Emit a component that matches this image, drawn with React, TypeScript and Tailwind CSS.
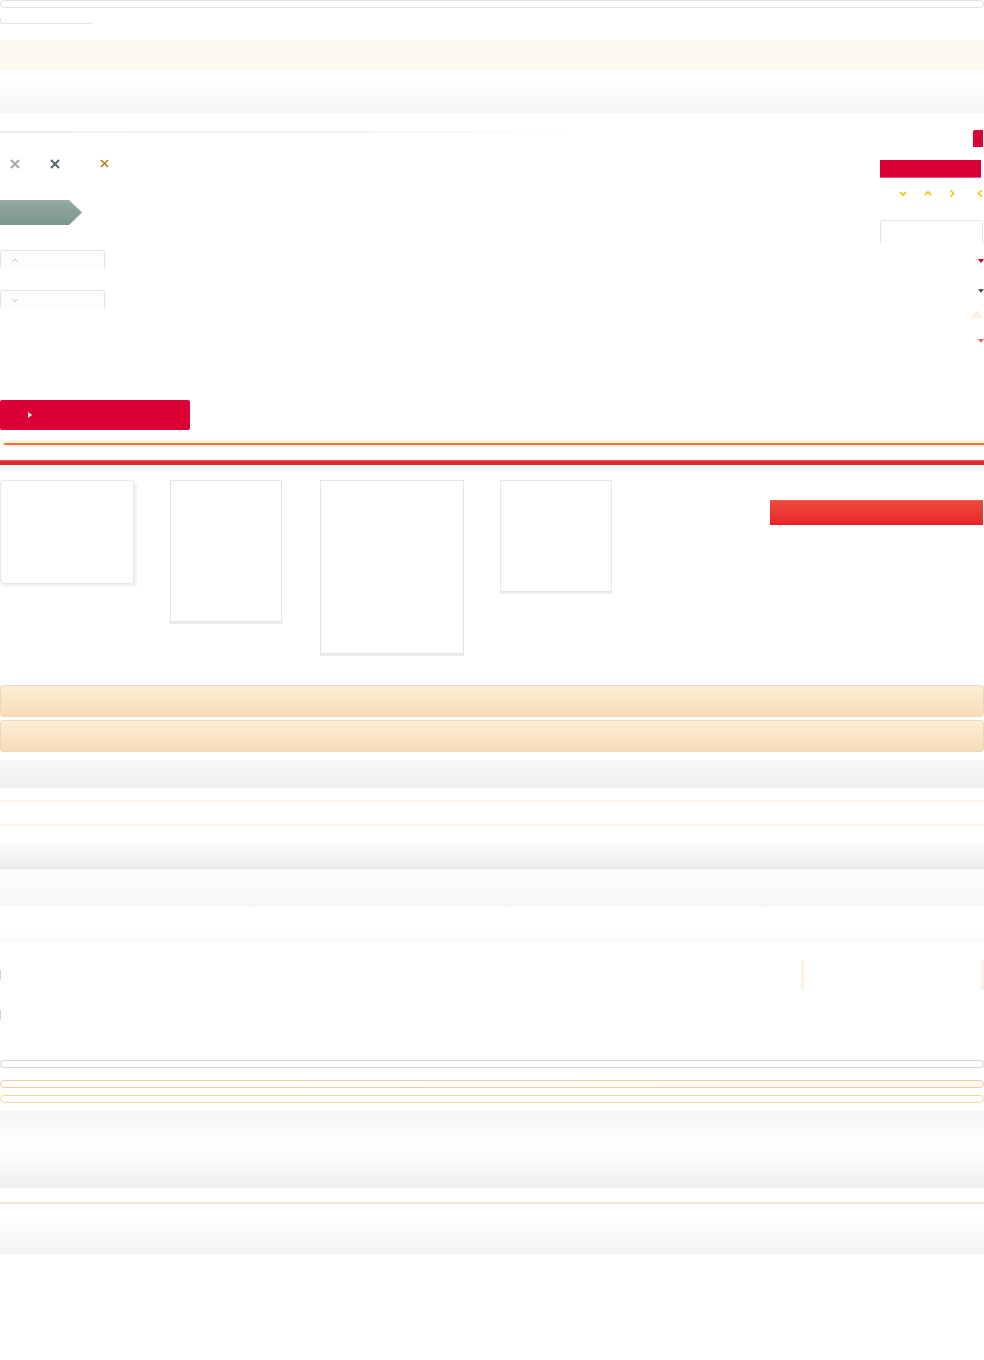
const Cross = ({ color, size, stroke }: { color: string; size: number; stroke: number }) => (
  <svg width={size} height={size} viewBox="0 0 10 10" className="block">
    <path d="M1 1L9 9M9 1L1 9" stroke={color} strokeWidth={stroke} fill="none" />
  </svg>
);

const Chevron = ({ dir, color, w, h, sw = 1.6 }: { dir: 'up' | 'down' | 'left' | 'right'; color: string; w: number; h: number; sw?: number }) => {
  const d = {
    down: 'M1 2L5 6L9 2',
    up: 'M1 6L5 2L9 6',
    right: 'M3 1L7 5L3 9',
    left: 'M7 1L3 5L7 9',
  }[dir];
  const vb = dir === 'up' || dir === 'down' ? '0 0 10 8' : '0 0 10 10';
  return (
    <svg width={w} height={h} viewBox={vb} className="block">
      <path d={d} stroke={color} strokeWidth={sw} fill="none" />
    </svg>
  );
};

const Tri = ({ dir, color, w, h }: { dir: 'up' | 'down'; color: string; w: number; h: number }) => (
  <svg width={w} height={h} viewBox="0 0 10 6" preserveAspectRatio="none" className="block">
    <path d={dir === 'down' ? 'M0 0H10L5 6Z' : 'M0 6H10L5 0Z'} fill={color} />
  </svg>
);

const Tab = ({ dir }: { dir: 'up' | 'down' }) => (
  <div className="h-[18px] w-[105px] rounded-t-[3px] border-x border-t border-[#e2e2e2] bg-[#fdfdfd] pl-[10px] pt-[7px]">
    <Chevron dir={dir} color="#a0a0a0" w={8} h={5} sw={1.2} />
  </div>
);

const Card = ({ w, h, ml }: { w: string; h: string; ml: string }) => (
  <div className={`${w} ${h} ${ml} border border-[#e5e5e5] bg-white shadow-[0_2px_0_#ececec]`} />
);

const App = () => {
  return (
    <div className="w-[984px] bg-white font-['Liberation_Sans',sans-serif]">
      {/* top strips */}
      <div className="h-[8px] rounded-full border border-[#e2e2e2]" />
      <div className="mt-[10px] h-[6px] w-[93px] rounded-bl-[3px] border-b border-l border-[#e4e4e4]" />
      <div className="mt-[16px] h-[30px] bg-[#fdf8f0]" />
      <div className="h-[43px] bg-gradient-to-b from-white from-30% to-[#f6f6f6]" />

      {/* controls */}
      <div className="flex h-[327px] justify-between">
        <div className="flex flex-col">
          <div className="mt-[18px] h-[2px] w-[580px] bg-gradient-to-r from-[#eeeeee] via-[#f1f1f1] to-transparent" />
          <div className="mt-[26px] flex h-[10px] items-center">
            <div className="ml-[10px]">
              <Cross color="#a8a8a8" size={10} stroke={2} />
            </div>
            <div className="ml-[30px]">
              <Cross color="#56666e" size={10} stroke={2} />
            </div>
            <div className="ml-[40px] -mt-[2px]">
              <Cross color="#b07a0a" size={9} stroke={1.6} />
            </div>
          </div>
          <div className="mt-[31px] h-[25px] w-[82px]">
            <svg width="82" height="25" viewBox="0 0 82 25" className="block">
              <defs>
                <linearGradient id="tag" x1="0" y1="0" x2="0" y2="1">
                  <stop offset="0" stopColor="#97aea7" />
                  <stop offset="0.2" stopColor="#8ea59e" />
                  <stop offset="1" stopColor="#7d968e" />
                </linearGradient>
              </defs>
              <path d="M0 0H69L82 12.5L69 25H0Z" fill="url(#tag)" />
            </svg>
          </div>
          <div className="mt-[25px]">
            <Tab dir="up" />
          </div>
          <div className="mt-[22px]">
            <Tab dir="down" />
          </div>
          <div className="mt-[92px] flex h-[30px] w-[190px] items-center rounded-[2px] bg-[#db0036] pl-[28px]">
            <svg width="4" height="6" viewBox="0 0 4 6" className="block">
              <path d="M0 0L4 3L0 6Z" fill="#ffffff" />
            </svg>
          </div>
        </div>

        <div className="flex w-[104px] flex-col">
          <div className="mt-[17px] mr-[1px] h-[17px] w-[10px] self-end rounded-tl-[2px] bg-[#db0036]" />
          <div className="mt-[13px] h-[17px] w-[101px] bg-[#db0036] shadow-[0_1px_0_#e9577a]" />
          <div className="mt-[11px] flex h-[10px] items-center">
            <div className="ml-[19px]">
              <Chevron dir="down" color="#f5c400" w={8} h={7} sw={2} />
            </div>
            <div className="ml-[17px]">
              <Chevron dir="up" color="#f5c400" w={8} h={7} sw={2} />
            </div>
            <div className="ml-[16px]">
              <Chevron dir="right" color="#f5c400" w={8} h={11} sw={2} />
            </div>
            <div className="ml-[20px]">
              <Chevron dir="left" color="#f5c400" w={8} h={11} sw={2} />
            </div>
          </div>
          <div className="mt-[22px] mr-[1px] h-[24px] rounded-t-[2px] border-x border-t border-[#e4e4e4]" />
          <div className="mt-[15px] self-end">
            <Tri dir="down" color="#cc0000" w={6} h={4} />
          </div>
          <div className="mt-[26px] self-end">
            <Tri dir="down" color="#555555" w={6} h={4} />
          </div>
          <div className="mt-[17px] self-end">
            <Tri dir="up" color="#fff0e3" w={14} h={8} />
          </div>
          <div className="mt-[21px] self-end">
            <Tri dir="down" color="#f26552" w={6} h={4} />
          </div>
        </div>
      </div>

      {/* progress lines */}
      <div className="ml-[2px] flex h-[7px] items-center rounded-l-full bg-[#fdf1e2] pl-[2px]">
        <div className="h-[2px] w-full rounded-l-full bg-[#fc7038]" />
      </div>
      <div className="mt-[13px] h-[5px] border-t border-[#f26060] bg-[#e8262a]" />

      {/* cards */}
      <div className="mt-[15px] flex h-[180px] items-start">
        <div className="h-[104px] w-[134px] rounded-[3px] border border-[#e8e8e8] bg-white shadow-[1px_1px_0_#f0f0f0,3px_3px_0_#f3f3f3]" />
        <Card w="w-[112px]" h="h-[142px]" ml="ml-[36px]" />
        <Card w="w-[144px]" h="h-[174px]" ml="ml-[38px]" />
        <Card w="w-[112px]" h="h-[112px]" ml="ml-[36px]" />
        <div className="mt-[20px] ml-[158px] h-[25px] w-[213px] border-t border-[#f25a4a] bg-gradient-to-b from-[#ec4a39] to-[#e8212a]" />
      </div>

      {/* bands */}
      <div className="mt-[25px] h-[32px] rounded-[3px] border border-[#ecd6bf] bg-gradient-to-b from-[#fbefd3] to-[#f8dcb9]" />
      <div className="mt-[3px] h-[32px] rounded-[3px] border border-[#ecd6bf] bg-gradient-to-b from-[#fbefd3] to-[#f8dcb9]" />
      <div className="mt-[8px] h-[28px] bg-gradient-to-b from-[#f7f7f7] to-[#eef0ef]" />
      <div className="mt-[12px] h-[26px] border-y-2 border-[#fff3e6] bg-white" />
      <div className="h-[43px] border-b border-[#e5e5e5] bg-gradient-to-b from-white from-30% to-[#ececec]" />
      <div className="h-[38px] bg-gradient-to-b from-[#fcfcfc] to-[#f8f8f8]" />
      <div className="mt-[18px] h-[18px] bg-gradient-to-b from-white to-[#f9f9f9]" />

      {/* markers */}
      <div className="mt-[17px] flex h-[80px] justify-between">
        <div className="flex flex-col">
          <div className="mt-[10px] h-[10px] w-px bg-[#d4d4d4]" />
          <div className="mt-[30px] h-[10px] w-px bg-[#d4d4d4]" />
        </div>
        <div className="flex h-[30px] w-[183px] justify-between">
          <div className="h-[30px] w-[3px] bg-[#fcefe3]" />
          <div className="h-[30px] w-[3px] bg-[#fcefe3]" />
        </div>
      </div>

      {/* outlined bars */}
      <div className="mt-[20px] h-[8px] rounded-full border border-[#d2d2d2]" />
      <div className="mt-[12px] h-[8px] rounded-full border border-[#f9c9a1] bg-gradient-to-r from-white from-30% to-[#fff6ee]" />
      <div className="mt-[7px] h-[8px] rounded-full border border-[#f7d898]" />
      <div className="mt-[8px] h-[77px] rounded-tl-[3px] rounded-tr-[3px] bg-gradient-to-b from-[#f5f5f5] via-white to-[#efefef]" />
      <div className="mt-[13px] h-[3px] rounded-tl-[3px] border-b-2 border-[#eee3cf]" />
      <div className="h-[50px] bg-gradient-to-b from-white from-30% to-[#f4f4f4]" />
      <div className="h-[107px]" />
    </div>
  );
};

export default App;
